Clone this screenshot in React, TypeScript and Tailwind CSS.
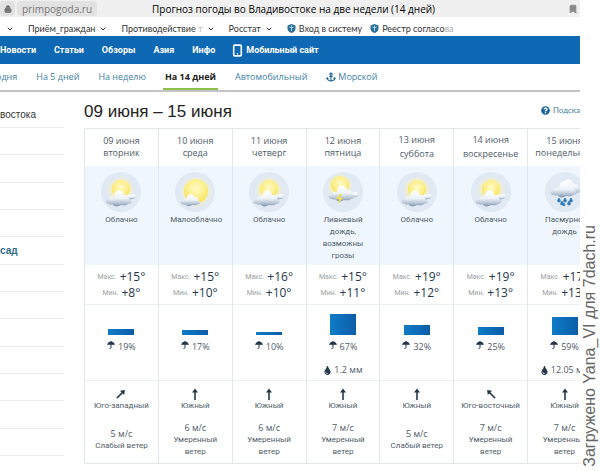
import { Bookmark, ChevronDown, Lock, Smartphone } from 'lucide-react';
import { FaAnchor, FaQuestionCircle, FaTint } from 'react-icons/fa';

type Sky = 'cloudy' | 'sunny' | 'storm' | 'rain';
type Wind = 'up' | 'up-left' | 'up-right';

interface Day {
  date: string;
  weekday: string;
  weekend?: boolean;
  sky: Sky;
  summary: string;
  max: string;
  min: string;
  chance: number;
  bar: number;
  amount?: string;
  wind: Wind;
  windFrom: string;
  speed: string;
  windName: string;
}

const days: Day[] = [
  { date: '09 июня', weekday: 'вторник', sky: 'cloudy', summary: 'Облачно', max: '+15°', min: '+8°', chance: 19, bar: 6, wind: 'up-right', windFrom: 'Юго-западный', speed: '5 м/с', windName: 'Слабый ветер' },
  { date: '10 июня', weekday: 'среда', sky: 'sunny', summary: 'Малооблачно', max: '+15°', min: '+10°', chance: 17, bar: 5, wind: 'up', windFrom: 'Южный', speed: '6 м/с', windName: 'Умеренный ветер' },
  { date: '11 июня', weekday: 'четверг', sky: 'cloudy', summary: 'Облачно', max: '+16°', min: '+10°', chance: 10, bar: 3, wind: 'up', windFrom: 'Южный', speed: '6 м/с', windName: 'Умеренный ветер' },
  { date: '12 июня', weekday: 'пятница', sky: 'storm', summary: 'Ливневый дождь, возможны грозы', max: '+15°', min: '+11°', chance: 67, bar: 21, amount: '1.2 мм', wind: 'up', windFrom: 'Южный', speed: '7 м/с', windName: 'Умеренный ветер' },
  { date: '13 июня', weekday: 'суббота', weekend: true, sky: 'cloudy', summary: 'Облачно', max: '+19°', min: '+12°', chance: 32, bar: 10, wind: 'up', windFrom: 'Южный', speed: '5 м/с', windName: 'Слабый ветер' },
  { date: '14 июня', weekday: 'воскресенье', weekend: true, sky: 'cloudy', summary: 'Облачно', max: '+19°', min: '+13°', chance: 25, bar: 8, wind: 'up-left', windFrom: 'Юго-восточный', speed: '7 м/с', windName: 'Умеренный ветер' },
  { date: '15 июня', weekday: 'понедельник', sky: 'rain', summary: 'Пасмурно, дождь', max: '+17°', min: '+13°', chance: 59, bar: 18, amount: '12.05 мм', wind: 'up', windFrom: 'Южный', speed: '7 м/с', windName: 'Умеренный ветер' },
];

const SkyDefs = () => (
  <svg className="absolute h-0 w-0" aria-hidden="true">
    <defs>
      <radialGradient id="sun" cx="50%" cy="40%" r="60%">
        <stop offset="0" stopColor="#fffac8" />
        <stop offset="0.6" stopColor="#fdef8c" />
        <stop offset="1" stopColor="#f8e05a" />
      </radialGradient>
      <radialGradient id="glow">
        <stop offset="0.5" stopColor="#fdf3a8" />
        <stop offset="1" stopColor="#fdf3b8" stopOpacity="0" />
      </radialGradient>
      <linearGradient id="cloud" x1="0" y1="0" x2="0" y2="1">
        <stop offset="0" stopColor="#ffffff" />
        <stop offset="0.5" stopColor="#eef3f8" />
        <stop offset="0.8" stopColor="#b4c4d4" />
        <stop offset="1" stopColor="#7c93aa" />
      </linearGradient>
    </defs>
  </svg>
);

const CLOUD = 'M8 32C3 32 4 27 8 27C9 24 12 24 13 25C13 17 22 16 23 23C27 22 29 25 28 27C32 28 31 32 27 32C25 34 22 33 20 33C17 35 13 35 11 32C10 33 9 33 8 32z';
const SMALL_CLOUD = 'M26 25C27 22 29 22 30 23C32 21 34 22 34 24C36 25 34 27 31 27C29 28 26 28 26 25z';

function SkyIcon({ sky }: { sky: Sky }) {
  return (
    <svg viewBox="0 0 40 40" className="mx-auto block size-10" aria-hidden="true">
      <circle cx="20" cy="20" r="20" fill="#e0e9f4" />
      {sky === 'cloudy' && (
        <>
          <circle cx="20" cy="18" r="14" fill="url(#glow)" />
          <circle cx="20" cy="17" r="9" fill="url(#sun)" />
          <path d={SMALL_CLOUD} fill="url(#cloud)" />
          <path d={CLOUD} fill="url(#cloud)" />
        </>
      )}
      {sky === 'sunny' && (
        <>
          <circle cx="21" cy="20" r="16" fill="url(#glow)" />
          <circle cx="21" cy="19" r="12" fill="url(#sun)" />
          <path d={CLOUD} transform="translate(2 8) scale(0.76)" fill="url(#cloud)" />
        </>
      )}
      {sky === 'storm' && (
        <>
          <circle cx="17" cy="14" r="13" fill="url(#glow)" />
          <circle cx="17" cy="13" r="9" fill="url(#sun)" />
          <path d={SMALL_CLOUD} transform="translate(1 -2)" fill="url(#cloud)" />
          <path d={CLOUD} transform="translate(1 -5)" fill="url(#cloud)" />
          <path d="M17 22l-4 5h3l-1 5 5-6h-3l2-4z" fill="#f4dc50" />
        </>
      )}
      {sky === 'rain' && (
        <>
          <path d={CLOUD} transform="translate(5 -11)" fill="url(#cloud)" />
          <path d={CLOUD} transform="translate(1 -9)" fill="url(#cloud)" />
          <path
            d="M14 26q-3 4 0 4t0-4zM20 26q-3 4 0 4t0-4zM26 26q-3 4 0 4t0-4zM17 29q-3 4 0 4t0-4zM24 29q-3 4 0 4t0-4zM19 31q-2 3 0 3t0-3z"
            fill="#2a78b8"
            stroke="#2a78b8"
            strokeWidth="0.6"
          />
        </>
      )}
    </svg>
  );
}

const windTurn: Record<Wind, string> = {
  up: '',
  'up-left': '-rotate-45',
  'up-right': 'rotate-45',
};

const WindIcon = ({ wind }: { wind: Wind }) => (
  <svg viewBox="0 0 12 12" className={`mx-auto block size-3 text-[#26374a] ${windTurn[wind]}`} aria-hidden="true">
    <path d="M6 0.5L9 4.5H3z" fill="currentColor" />
    <path d="M6 3v9" stroke="currentColor" strokeWidth="1.6" />
  </svg>
);

const Umbrella = () => (
  <svg viewBox="0 0 16 16" className="-mt-1 size-2 text-[#26374a]" aria-hidden="true">
    <path d="M0 8C1 3 5 1 8 1s7 2 8 7c-2-1-3-1-4 0-1-1-3-1-4 0-1-1-3-1-4 0-1-1-2-1-4 0z" fill="currentColor" />
    <path d="M8 0v13q0 2-3 2" fill="none" stroke="currentColor" strokeWidth="2" />
  </svg>
);

const Emblem = () => (
  <svg viewBox="0 0 18 18" className="size-[9px]" aria-hidden="true">
    <path d="M9 0l8 3v6q0 6-8 9-8-3-8-9V3z" fill="#2b6f96" />
    <path d="M9 3v11M5 6q4 4 8 0" fill="none" stroke="#a9d4e8" strokeWidth="2" />
  </svg>
);

const folders = ['Приём_граждан', 'Противодействие т', 'Росстат'];
const sections = ['Новости', 'Статьи', 'Обзоры', 'Азия', 'Инфо'];
const cell = 'border-x border-[#e4e7ea] p-0 align-top';

export default function App() {
  return (
    <div className="flex min-h-screen overflow-hidden bg-white font-['Open_Sans','Noto_Sans',sans-serif]">
      <SkyDefs />
      <div className="min-w-0 flex-1 overflow-hidden">
        <div className="flex h-[17px] items-center bg-[#f0f0f0] text-[10px] leading-4">
          <div className="flex h-[15px] w-[15px] items-center justify-center rounded bg-[#e2e2e2] text-[#777]">
            <Lock size={8} strokeWidth={3} fill="currentColor" />
          </div>
          <div className="ml-0.5 flex h-[15px] w-20 items-center justify-center rounded bg-[#e2e2e2] text-[#777]">
            primpogoda.ru
          </div>
          <div className="min-w-0 flex-1 pl-[55px] whitespace-nowrap text-black">
            Прогноз погоды во Владивостоке на две недели (14 дней)
          </div>
          <button type="button" aria-label="Закладка" className="mr-0.5 text-[#8a8a8a]">
            <Bookmark size={10} fill="currentColor" />
          </button>
        </div>

        <div className="flex h-[19px] items-center gap-[14px] pt-1 pl-1.5 font-['Lato',sans-serif] text-[9px] leading-3 whitespace-nowrap text-[#333]">
          <ChevronDown size={8} strokeWidth={3} />
          {folders.map((name) => (
            <button key={name} type="button" className="flex items-center gap-1">
              {name.endsWith(' т') ? (
                <span>
                  {name.slice(0, -1)}
                  <span className="text-[#bbb]">т</span>
                </span>
              ) : (
                name
              )}
              <ChevronDown size={8} strokeWidth={3} />
            </button>
          ))}
          <div className="flex gap-2">
            <a href="#login" className="flex items-center gap-[3px]">
              <Emblem />
              Вход в систему
            </a>
            <a href="#registry" className="flex items-center gap-[3px]">
              <Emblem />
              <span>
                Реестр согласо<span className="text-[#aaa]">ва</span>
              </span>
            </a>
          </div>
        </div>

        <nav className="flex h-7 items-center gap-[18px] bg-[#0e68b3] font-['Roboto',sans-serif] text-[9px] leading-3 font-bold whitespace-nowrap text-white">
          {sections.map((name) => (
            <a key={name} href="#section">
              {name}
            </a>
          ))}
          <a href="#mobile" className="flex items-center gap-1">
            <Smartphone size={13} strokeWidth={3} className="-mx-0.5" />
            Мобильный сайт
          </a>
        </nav>

        <nav className="-ml-1 flex h-7 gap-[19px] border-b-2 border-[#c4c4c4] text-[9px] leading-[26px] whitespace-nowrap text-[#447fa5]">
          <a href="#today">одня</a>
          <a href="#5">На 5 дней</a>
          <a href="#7">На неделю</a>
          <a href="#14" className="-mx-0.5 border-b-2 border-[#8cbf4d] px-0.5 font-bold text-[#222]">
            На 14 дней
          </a>
          <a href="#auto">Автомобильный</a>
          <a href="#sea" className="flex items-center gap-0.5">
            <FaAnchor size={10} className="text-[#1c639a]" />
            Морской
          </a>
        </nav>

        <div className="flex">
          <aside className="w-16 shrink-0 font-['Liberation_Sans',sans-serif] text-[10px] text-[#333]">
            <div className="flex h-9 items-center border-b border-[#ececec] pt-2.5">востока</div>
            <ul className="grid h-[328px] auto-rows-fr">
              {Array.from({ length: 12 }, (_, i) => (
                <li key={i} className="flex items-center border-b border-[#ececec]">
                  {i === 4 && (
                    <a href="#posad" className="font-bold text-[#2d6c8c]">
                      сад
                    </a>
                  )}
                </li>
              ))}
            </ul>
          </aside>

          <main className="ml-5 min-w-0 flex-1">
            <div className="flex h-9 items-center justify-between whitespace-nowrap">
              <h1 className="pt-1 font-['Liberation_Sans',sans-serif] text-[17px] leading-6 text-[#222]">
                09 июня – 15 июня
              </h1>
              <a href="#help" className="flex items-center gap-[3px] font-['Lato',sans-serif] text-[8px] text-[#447fa5]">
                <FaQuestionCircle size={9} className="shrink-0 text-[#1c639a]" />
                Подска
              </a>
            </div>

            <table className="w-[518px] table-fixed border-collapse border border-[#e4e7ea] text-center text-[9px] leading-3 text-[#505c68]">
              <thead>
                <tr className="h-[37px]">
                  {days.map((day) => (
                    <th
                      key={day.date}
                      className={`border-x border-[#e4e7ea] p-0 font-normal ${day.weekend ? 'leading-[14px]' : 'leading-3'}`}
                    >
                      {day.date}
                      <br />
                      {day.weekday}
                    </th>
                  ))}
                </tr>
              </thead>
              <tbody>
                <tr className="h-[99px] bg-[#eff6fd]">
                  {days.map((day) => (
                    <td key={day.date} className={`${cell} pt-1.5`}>
                      <SkyIcon sky={day.sky} />
                      <p className="mx-auto mt-0.5 w-[50px] font-['Roboto',sans-serif] text-[8px] leading-3">
                        {day.summary}
                      </p>
                    </td>
                  ))}
                </tr>
                <tr className="h-10 border-b border-[#eceff1]">
                  {days.map((day) => (
                    <td key={day.date} className={`${cell} pt-1`}>
                      {[['Макс.', day.max], ['Мин.', day.min]].map(([label, value]) => (
                        <p key={label} className="flex items-center justify-center gap-[3px] leading-4">
                          <span className="font-['Roboto',sans-serif] text-[7px] text-[#9a9fa4]">{label}</span>
                          <span className="text-[12px] text-[#26374a]">{value}</span>
                        </p>
                      ))}
                    </td>
                  ))}
                </tr>
                <tr className="h-[76px] border-b border-[#eceff1]">
                  {days.map((day) => (
                    <td key={day.date} className={cell}>
                      <div className="flex h-[30px] items-end justify-center">
                        <div
                          className="w-[26px] bg-linear-to-r from-[#0f7cc8] to-[#0c5da8]"
                          style={{ height: day.bar }}
                        />
                      </div>
                      <p className="mt-1 flex items-center justify-center gap-[3px] leading-4">
                        <Umbrella />
                        {day.chance}%
                      </p>
                      {day.amount && (
                        <p className="mt-[7px] flex items-center justify-center gap-0.5 leading-4 whitespace-nowrap">
                          <FaTint size={9} className="text-[#26374a]" />
                          {day.amount}
                        </p>
                      )}
                    </td>
                  ))}
                </tr>
                <tr className="h-[83px]">
                  {days.map((day) => (
                    <td key={day.date} className={`${cell} pt-[7px]`}>
                      <WindIcon wind={day.wind} />
                      <p className="font-['Roboto',sans-serif] text-[8px] leading-3 whitespace-nowrap">{day.windFrom}</p>
                      <div className="mt-2.5 flex h-9 flex-col items-center justify-center">
                        <p>{day.speed}</p>
                        <p
                          className={`font-['Roboto',sans-serif] text-[8px] leading-3 ${
                            day.windName.startsWith('Слабый') ? 'whitespace-nowrap' : 'w-11'
                          }`}
                        >
                          {day.windName}
                        </p>
                      </div>
                    </td>
                  ))}
                </tr>
              </tbody>
            </table>
          </main>
        </div>
      </div>

      <div className="flex w-5 shrink-0 items-center">
        <p className="mt-auto mb-1 rotate-180 font-['Liberation_Sans',sans-serif] text-[16px] leading-5 whitespace-nowrap text-[#666] [writing-mode:vertical-rl]">
          Загружено Yana_VI для 7dach.ru
        </p>
      </div>
    </div>
  );
}
